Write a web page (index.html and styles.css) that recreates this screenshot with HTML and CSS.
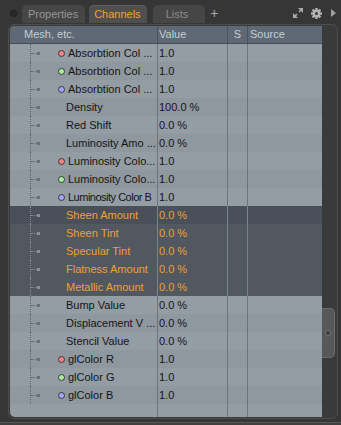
FILE: index.html
```html
<!DOCTYPE html>
<html lang="en">
<head>
    <meta charset="UTF-8">
    <title>Channels</title>
    <link rel="stylesheet" href="styles.css">
</head>
<body>
    <div class="tabbar">
        <div class="grip"></div>
        <div class="tab tab-props">Properties</div>
        <div class="tab tab-active">Channels</div>
        <div class="tab tab-lists">Lists</div>
        <div class="plus">+</div>
        <div class="tools">
            <svg class="icon" width="12" height="12" viewBox="0 0 12 12">
                <polygon points="11,1 11,6 6,1" fill="#a9a9a9"/>
                <line x1="9" y1="3" x2="7" y2="5" stroke="#a9a9a9" stroke-width="1.6"/>
                <polygon points="1,11 1,6 6,11" fill="#a9a9a9"/>
                <line x1="3" y1="9" x2="5" y2="7" stroke="#a9a9a9" stroke-width="1.6"/>
            </svg>
            <svg class="icon gear" width="11" height="11" viewBox="0 0 11 11">
                <g fill="#b4b4b4">
                    <rect x="4.3" y="0" width="2.4" height="11"/>
                    <rect x="0" y="4.3" width="11" height="2.4"/>
                    <rect x="4.3" y="0" width="2.4" height="11" transform="rotate(45 5.5 5.5)"/>
                    <rect x="4.3" y="0" width="2.4" height="11" transform="rotate(-45 5.5 5.5)"/>
                    <circle cx="5.5" cy="5.5" r="3.8"/>
                </g>
                <circle cx="5.5" cy="5.5" r="1.5" fill="#353535"/>
            </svg>
            <svg class="icon arrow" width="5" height="8" viewBox="0 0 5 8">
                <polygon points="0,0 5,4 0,8" fill="#a0a0a0"/>
            </svg>
        </div>
    </div>

    <div class="frame">
        <div class="table">
            <div class="row head">
                <div class="cell name">Mesh, etc.</div>
                <div class="cell">Value</div>
                <div class="cell s">S</div>
                <div class="cell src">Source</div>
            </div>

            <div class="row">
                <div class="cell label"><span class="tree"><i class="branch"></i><i class="node"></i></span><span class="dot red"></span>Absorbtion Col ...</div>
                <div class="cell">1.0</div><div class="cell"></div><div class="cell"></div>
            </div>
            <div class="row alt">
                <div class="cell label"><span class="tree"><i class="branch"></i><i class="node"></i></span><span class="dot green"></span>Absorbtion Col ...</div>
                <div class="cell">1.0</div><div class="cell"></div><div class="cell"></div>
            </div>
            <div class="row">
                <div class="cell label"><span class="tree"><i class="branch"></i><i class="node"></i></span><span class="dot blue"></span>Absorbtion Col ...</div>
                <div class="cell">1.0</div><div class="cell"></div><div class="cell"></div>
            </div>
            <div class="row alt">
                <div class="cell label"><span class="tree"><i class="branch"></i><i class="node"></i></span><span class="plain">Density</span></div>
                <div class="cell">100.0 %</div><div class="cell"></div><div class="cell"></div>
            </div>
            <div class="row">
                <div class="cell label"><span class="tree"><i class="branch"></i><i class="node"></i></span><span class="plain">Red Shift</span></div>
                <div class="cell">0.0 %</div><div class="cell"></div><div class="cell"></div>
            </div>
            <div class="row alt">
                <div class="cell label"><span class="tree"><i class="branch"></i><i class="node"></i></span><span class="plain">Luminosity Amo ...</span></div>
                <div class="cell">0.0 %</div><div class="cell"></div><div class="cell"></div>
            </div>
            <div class="row">
                <div class="cell label"><span class="tree"><i class="branch"></i><i class="node"></i></span><span class="dot red"></span>Luminosity Colo...</div>
                <div class="cell">1.0</div><div class="cell"></div><div class="cell"></div>
            </div>
            <div class="row alt">
                <div class="cell label"><span class="tree"><i class="branch"></i><i class="node"></i></span><span class="dot green"></span>Luminosity Colo...</div>
                <div class="cell">1.0</div><div class="cell"></div><div class="cell"></div>
            </div>
            <div class="row">
                <div class="cell label"><span class="tree"><i class="branch"></i><i class="node"></i></span><span class="dot blue"></span><span class="tight">Luminosity Color B</span></div>
                <div class="cell">1.0</div><div class="cell"></div><div class="cell"></div>
            </div>

            <div class="row selected lead">
                <div class="cell label"><span class="tree"><i class="branch"></i><i class="node"></i></span><span class="plain">Sheen Amount</span></div>
                <div class="cell">0.0 %</div><div class="cell"></div><div class="cell"></div>
            </div>
            <div class="row selected">
                <div class="cell label"><span class="tree"><i class="branch"></i><i class="node"></i></span><span class="plain">Sheen Tint</span></div>
                <div class="cell">0.0 %</div><div class="cell"></div><div class="cell"></div>
            </div>
            <div class="row selected">
                <div class="cell label"><span class="tree"><i class="branch"></i><i class="node"></i></span><span class="plain">Specular Tint</span></div>
                <div class="cell">0.0 %</div><div class="cell"></div><div class="cell"></div>
            </div>
            <div class="row selected">
                <div class="cell label"><span class="tree"><i class="branch"></i><i class="node"></i></span><span class="plain">Flatness Amount</span></div>
                <div class="cell">0.0 %</div><div class="cell"></div><div class="cell"></div>
            </div>
            <div class="row selected">
                <div class="cell label"><span class="tree"><i class="branch"></i><i class="node"></i></span><span class="plain">Metallic Amount</span></div>
                <div class="cell">0.0 %</div><div class="cell"></div><div class="cell"></div>
            </div>

            <div class="row">
                <div class="cell label"><span class="tree"><i class="branch"></i><i class="node"></i></span><span class="plain">Bump Value</span></div>
                <div class="cell">0.0 %</div><div class="cell"></div><div class="cell"></div>
            </div>
            <div class="row alt">
                <div class="cell label"><span class="tree"><i class="branch"></i><i class="node"></i></span><span class="plain">Displacement V ...</span></div>
                <div class="cell">0.0 %</div><div class="cell"></div><div class="cell"></div>
            </div>
            <div class="row">
                <div class="cell label"><span class="tree"><i class="branch"></i><i class="node"></i></span><span class="plain">Stencil Value</span></div>
                <div class="cell">0.0 %</div><div class="cell"></div><div class="cell"></div>
            </div>
            <div class="row alt">
                <div class="cell label"><span class="tree"><i class="branch"></i><i class="node"></i></span><span class="dot red"></span>glColor R</div>
                <div class="cell">1.0</div><div class="cell"></div><div class="cell"></div>
            </div>
            <div class="row">
                <div class="cell label"><span class="tree"><i class="branch"></i><i class="node"></i></span><span class="dot green"></span>glColor G</div>
                <div class="cell">1.0</div><div class="cell"></div><div class="cell"></div>
            </div>
            <div class="row alt">
                <div class="cell label"><span class="tree"><i class="branch"></i><i class="node"></i></span><span class="dot blue"></span>glColor B</div>
                <div class="cell">1.0</div><div class="cell"></div><div class="cell"></div>
            </div>

            <div class="row filler">
                <div class="cell"></div><div class="cell"></div><div class="cell"></div><div class="cell"></div>
            </div>
        </div>
        <div class="scroll">
            <div class="thumb"><span class="knob"></span></div>
        </div>
    </div>

    <div class="bottombar"></div>
</body>
</html>
```

FILE: styles.css
```css
body {
    margin: 0;
    width: 341px;
    height: 425px;
    overflow: hidden;
    background-color: #363636;
    font-family: "Liberation Sans", Arial, sans-serif;
    font-size: 11px;
    color: #151515;
}

/* tab strip */
.tabbar {
    height: 24px;
    display: flex;
    align-items: flex-end;
    padding-left: 10px;
    box-sizing: border-box;
}

.grip {
    width: 5px;
    height: 5px;
    border: 1px solid #1c1c1c;
    border-radius: 50%;
    background: #2a2a2a;
    align-self: center;
    margin-top: 3px;
    margin-right: 5px;
}

.tab {
    height: 18px;
    line-height: 18px;
    border-radius: 5px 5px 0 0;
    background-color: #464646;
    color: #959595;
    margin-bottom: 1px;
}

.tab-props {
    padding: 0 7px 0 6px;
    margin-right: 4px;
}

.tab-active {
    background-color: #4f4f4f;
    color: #f0a22e;
    padding: 0 6px 0 5px;
    margin-right: 6px;
    box-shadow: inset 0 1px 0 #5e5e5e;
}

.tab-lists {
    padding: 0 17px 0 13px;
    color: #8a8a8a;
}

.plus {
    color: #a8a8a8;
    font-size: 14px;
    line-height: 18px;
    margin-left: 5px;
    margin-bottom: 2px;
}

.tools {
    margin-left: auto;
    display: flex;
    align-items: center;
    align-self: center;
    margin-top: 2px;
    padding-right: 5px;
}

.icon {
    display: block;
}

.gear {
    margin-left: 7px;
}

.arrow {
    margin-left: 9px;
}

/* panel frame */
.frame {
    display: flex;
    width: 327px;
    height: 391px;
    margin-left: 8px;
    padding: 1px 0 1px 1px;
    border: 1px solid #4d4d4d;
    border-radius: 6px;
    background-color: #3a3a3a;
}

.table {
    width: 312px;
    display: flex;
    flex-direction: column;
    background-color: #949ca4;
    border-radius: 5px 0 0 5px;
    overflow: hidden;
}

.row {
    display: grid;
    grid-template-columns: 147px 70px 20px 75px;
    height: 18px;
    line-height: 19px;
    white-space: nowrap;
}

.row.alt {
    background-color: #8f979f;
}

.cell {
    overflow: hidden;
    padding-left: 1px;
}

.row .cell + .cell {
    border-left: 1px solid #6c757d;
}

.head {
    height: 17px;
    line-height: 17px;
    background-color: #5e6975;
    color: #c3cdd7;
    border-bottom: 1px solid #434b53;
}

.head .cell + .cell {
    border-left-color: #4b545d;
}

.head .name {
    padding-left: 14px;
}

.head .s {
    text-align: center;
    padding-left: 0;
}

.head .src {
    padding-left: 2px;
}

.label {
    display: flex;
    align-items: center;
    padding-left: 20px;
}

.tree {
    width: 28px;
    height: 18px;
    box-sizing: border-box;
    border-left: 1px dotted #60666c;
    display: flex;
    align-items: center;
    flex: none;
}

.branch {
    width: 6px;
    border-top: 1px dotted #60666c;
}

.node {
    width: 3px;
    height: 3px;
    background-color: #6a7076;
}

.plain {
    margin-left: 8px;
}

.tight {
    letter-spacing: -0.5px;
}

.dot {
    width: 5px;
    height: 5px;
    border: 1px solid #3a3a3a;
    border-radius: 50%;
    margin-right: 3px;
    flex: none;
}

.red { background-color: #f47f84; }
.green { background-color: #a8ee9c; }
.blue { background-color: #a3a3fb; }

.selected {
    background-color: #515860;
    color: #eea030;
}

.selected.lead {
    background-color: #49505a;
}

.selected .cell + .cell {
    border-left-color: #7b838b;
}

.selected .tree,
.selected .branch {
    border-color: #868c92;
}

.selected .node {
    background-color: #8a9096;
}

.filler {
    flex: 1;
    height: auto;
}

/* scrollbar */
.scroll {
    width: 14px;
    border-radius: 0 5px 5px 0;
}

.thumb {
    margin-top: 282px;
    width: 12px;
    height: 48px;
    background-color: #585858;
    border: 1px solid #6b6b6b;
    border-left: none;
    border-radius: 0 5px 5px 0;
    display: flex;
    align-items: center;
    justify-content: center;
}

.knob {
    width: 4px;
    height: 4px;
    border-radius: 50%;
    background-color: #3c3c3c;
    box-shadow: 0 0 0 1px #707070;
}

.bottombar {
    margin-top: 3px;
    height: 4px;
    border-top: 1px solid #585858;
    background-color: #3f3f3f;
}
```
